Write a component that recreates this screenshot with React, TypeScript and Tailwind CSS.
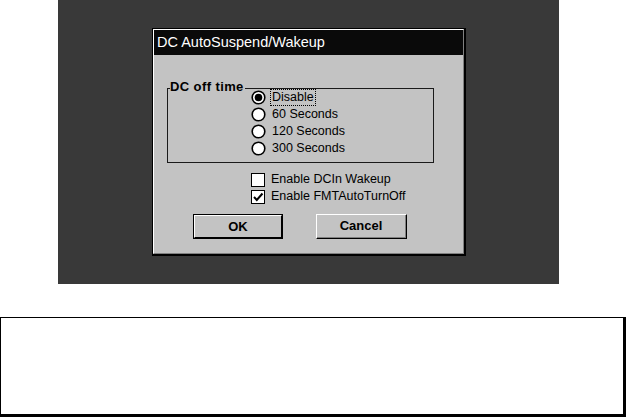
const font = { fontFamily: '"Liberation Sans", Arial, sans-serif' };

const Radio = ({ checked }: { checked?: boolean }) => (
  <svg width="15" height="15" viewBox="0 0 15 15" className="shrink-0">
    <circle cx="7.5" cy="7.5" r="6.3" fill="#fff" stroke="#000" strokeWidth="1.6" />
    {checked && <circle cx="7.5" cy="7.5" r="3.8" fill="#000" />}
  </svg>
);

const Check = ({ checked }: { checked?: boolean }) => (
  <div className="w-[14px] h-[14px] shrink-0 bg-white border border-black flex items-center justify-center">
    {checked && (
      <svg width="12" height="12" viewBox="0 0 12 12">
        <path d="M2 6 L4.8 9 L10.5 2.5" fill="none" stroke="#000" strokeWidth="2" />
      </svg>
    )}
  </div>
);

const options = ["Disable", "60 Seconds", "120 Seconds", "300 Seconds"];

export default function App() {
  return (
    <div className="w-[626px] h-[417px] bg-white overflow-hidden" style={font}>
      <div className="ml-[58px] w-[501px] h-[284px] bg-[#393939] pt-[28px] pl-[94px]">
        {/* dialog */}
        <div className="w-[314px] h-[228px] border-t border-l border-r-2 border-b-2 border-black">
          <div className="h-full border-t border-l border-t-white border-l-white border-r border-b border-r-[#808080] border-b-[#808080] flex flex-col">
            <div className="h-[25px] bg-[#0a0a0a] text-white text-[14.5px] leading-none flex items-center pl-[3px]">
              DC AutoSuspend/Wakeup
            </div>
            <div className="flex-1 bg-[#c3c3c3] text-[12.5px] text-black">
              {/* group box */}
              <div className="relative mt-[33px] ml-[13px] w-[267px] h-[75px] border border-[#1a1a1a]">
                <span className="absolute -top-[10px] left-[2px] bg-[#c3c3c3] pr-[1px] text-[13px] font-bold leading-[15px] tracking-[0.4px]">
                  DC off time
                </span>
                <div className="pl-[83px] flex flex-col">
                  {options.map((o, i) => (
                    <div key={o} className="h-[17px] flex items-center">
                      <Radio checked={i === 0} />
                      {i === 0 ? (
                        <span className="ml-[4px] h-[17px] px-[1px] flex items-center border border-dotted border-black">
                          {o}
                        </span>
                      ) : (
                        <span className="ml-[6px]">{o}</span>
                      )}
                    </div>
                  ))}
                </div>
              </div>
              {/* checkboxes */}
              <div className="mt-[8px] pl-[97px] flex flex-col">
                <div className="h-[17px] flex items-center gap-[6px]">
                  <Check />
                  <span>Enable DCIn Wakeup</span>
                </div>
                <div className="h-[17px] flex items-center gap-[6px]">
                  <Check checked />
                  <span>Enable FMTAutoTurnOff</span>
                </div>
              </div>
              {/* buttons */}
              <div className="mt-[9px] pl-[39px] flex gap-[33px] text-[13px] font-bold">
                <div className="w-[90px] h-[25px] border border-black">
                  <div className="h-full border-t border-l border-t-white border-l-white border-r border-b border-black flex items-center justify-center">
                    OK
                  </div>
                </div>
                <div className="w-[91px] h-[25px] border-t border-l border-t-white border-l-white border-r border-b border-black">
                  <div className="h-full border-r border-b border-[#808080] flex items-center justify-center">
                    Cancel
                  </div>
                </div>
              </div>
            </div>
          </div>
        </div>
      </div>
      <div className="mt-[33px] w-[626px] h-[100px] border-t border-l border-r-[3px] border-b-[3px] border-black bg-white" />
    </div>
  );
}
